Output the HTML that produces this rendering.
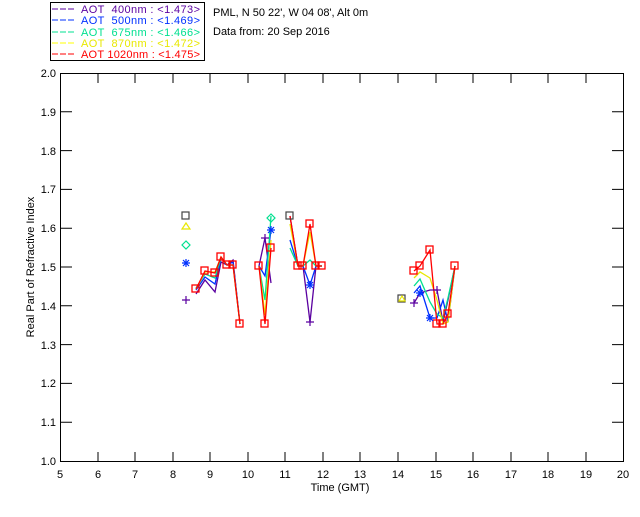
<!DOCTYPE html>
<html><head><meta charset="utf-8"><style>
body{margin:0;background:#fff;width:640px;height:512px;overflow:hidden}
svg text{font-family:"Liberation Sans",sans-serif;font-size:11px}
</style></head><body>
<svg width="640" height="512" xmlns="http://www.w3.org/2000/svg">
<rect x="50.5" y="2.5" width="154" height="58" fill="none" stroke="#000"/>
<g font-size="11">
<line x1="52" y1="9" x2="74" y2="9" stroke="#5a00a0" stroke-dasharray="6,2"/>
<text x="81" y="13" fill="#5a00a0" textLength="119" xml:space="preserve">AOT  400nm : &lt;1.473&gt;</text>
<line x1="52" y1="20" x2="74" y2="20" stroke="#0030ff" stroke-dasharray="6,2"/>
<text x="81" y="24" fill="#0030ff" textLength="119" xml:space="preserve">AOT  500nm : &lt;1.469&gt;</text>
<line x1="52" y1="32" x2="74" y2="32" stroke="#00e090" stroke-dasharray="6,2"/>
<text x="81" y="36" fill="#00e090" textLength="119" xml:space="preserve">AOT  675nm : &lt;1.466&gt;</text>
<line x1="52" y1="43" x2="74" y2="43" stroke="#ffff00" stroke-dasharray="6,2"/>
<text x="81" y="47" fill="#e8e800" textLength="119" xml:space="preserve">AOT  870nm : &lt;1.472&gt;</text>
<line x1="52" y1="54" x2="74" y2="54" stroke="#ff0000" stroke-dasharray="6,2"/>
<text x="81" y="58" fill="#ff0000" textLength="119" xml:space="preserve">AOT 1020nm : &lt;1.475&gt;</text>
</g>
<text x="213" y="16">PML, N 50 22', W 04 08', Alt 0m</text>
<text x="213" y="35">Data from: 20 Sep 2016</text>
<rect x="60.5" y="73.5" width="563" height="388" fill="none" stroke="#000"/>
<g stroke="#000" id="t">
<path d="M98 461v-9M135 461v-9M173 461v-9M210 461v-9M248 461v-9M285 461v-9M323 461v-9M360 461v-9M398 461v-9M436 461v-9M473 461v-9M511 461v-9M548 461v-9M586 461v-9"/>
<path d="M98 74v9M135 74v9M173 74v9M210 74v9M248 74v9M285 74v9M323 74v9M360 74v9M398 74v9M436 74v9M473 74v9M511 74v9M548 74v9M586 74v9"/>
<path d="M61 422.2h11M61 383.4h11M61 344.6h11M61 305.8h11M61 267h11M61 228.2h11M61 189.4h11M61 150.6h11M61 111.8h11"/>
<path d="M623 422.2h-11M623 383.4h-11M623 344.6h-11M623 305.8h-11M623 267h-11M623 228.2h-11M623 189.4h-11M623 150.6h-11M623 111.8h-11"/>
</g>
<g text-anchor="end">
<text x="56" y="465">1.0</text><text x="56" y="426">1.1</text><text x="56" y="387">1.2</text><text x="56" y="349">1.3</text><text x="56" y="310">1.4</text><text x="56" y="271">1.5</text><text x="56" y="232">1.6</text><text x="56" y="193">1.7</text><text x="56" y="155">1.8</text><text x="56" y="116">1.9</text><text x="56" y="77">2.0</text>
</g>
<g text-anchor="middle">
<text x="60" y="478">5</text><text x="98" y="478">6</text><text x="135" y="478">7</text><text x="173" y="478">8</text><text x="210" y="478">9</text><text x="248" y="478">10</text><text x="285" y="478">11</text><text x="323" y="478">12</text><text x="360" y="478">13</text><text x="398" y="478">14</text><text x="436" y="478">15</text><text x="473" y="478">16</text><text x="511" y="478">17</text><text x="548" y="478">18</text><text x="586" y="478">19</text><text x="623" y="478">20</text>
<text x="340" y="491">Time (GMT)</text>
<text transform="translate(34,267) rotate(-90)">Real Part of Refractive Index</text>
</g>
<g fill="none" stroke-width="1.3">
<polyline stroke="#5a00a0" points="196,294 205,280 215,292 221,262 227,265 233,260 240,324"/>
<polyline stroke="#5a00a0" points="259,266 265,238 271,283"/>
<polyline stroke="#5a00a0" points="290,216 298,266 303,266 310,322 316,266 322,266"/>
<polyline stroke="#5a00a0" points="414,303 420,293 430,290 437,290 443,322 448,300 455,266"/>
<polyline stroke="#0030ff" points="196,290 205,277 215,284 221,258 227,265 233,262 240,324"/>
<polyline stroke="#0030ff" points="259,266 265,276 271,230"/>
<polyline stroke="#0030ff" points="290,240 298,266 303,266 310,285 316,266 322,266"/>
<polyline stroke="#0030ff" points="414,293 420,286 430,318 437,318 443,300 448,322 455,266"/>
<polyline stroke="#00e090" points="196,288 205,274 215,278 221,258 227,265 233,265 240,324"/>
<polyline stroke="#00e090" points="259,266 265,300 271,216"/>
<polyline stroke="#00e090" points="290,248 298,266 303,266 310,260 316,266 322,266"/>
<polyline stroke="#00e090" points="414,286 420,279 430,302 437,314 443,318 448,298 455,266"/>
<polyline stroke="#e8e800" points="196,289 205,272 215,272 221,257 227,265 233,265 240,324"/>
<polyline stroke="#e8e800" points="259,266 265,315 271,240"/>
<polyline stroke="#e8e800" points="290,224 298,266 303,266 310,232 316,266 322,266"/>
<polyline stroke="#e8e800" points="414,278 420,272 430,278 437,300 443,324 448,322 455,266"/>
<polyline stroke="#ff0000" points="196,289 205,271 215,273 221,257 227,265 233,265 240,324"/>
<polyline stroke="#ff0000" points="259,266 265,324 271,248"/>
<polyline stroke="#ff0000" points="290,216 298,266 303,266 310,224 316,266 322,266"/>
<polyline stroke="#ff0000" points="414,271 420,266 430,250 437,324 443,324 448,314 455,266"/>
</g>
<g fill="none" stroke="#ff0000" stroke-width="1.3">
<rect x="192" y="285" width="7" height="7"/><rect x="201" y="267" width="7" height="7"/><rect x="211" y="269" width="7" height="7"/><rect x="217" y="253" width="7" height="7"/><rect x="223" y="261" width="7" height="7"/><rect x="229" y="261" width="7" height="7"/><rect x="236" y="320" width="7" height="7"/><rect x="255" y="262" width="7" height="7"/><rect x="261" y="320" width="7" height="7"/><rect x="267" y="244" width="7" height="7"/><rect x="294" y="262" width="7" height="7"/><rect x="299" y="262" width="7" height="7"/><rect x="306" y="220" width="7" height="7"/><rect x="312" y="262" width="7" height="7"/><rect x="318" y="262" width="7" height="7"/><rect x="410" y="267" width="7" height="7"/><rect x="416" y="262" width="7" height="7"/><rect x="426" y="246" width="7" height="7"/><rect x="433" y="320" width="7" height="7"/><rect x="439" y="320" width="7" height="7"/><rect x="444" y="310" width="7" height="7"/><rect x="451" y="262" width="7" height="7"/>
</g>
<g fill="none" stroke="#444" stroke-width="1.2">
<rect x="182" y="212" width="7" height="7"/><rect x="286" y="212" width="7" height="7"/><rect x="398" y="295" width="7" height="7"/>
</g>
<g fill="none" stroke-width="1.2">
<path stroke="#e8e800" d="M186 223l-4 6h8z M402 296l-3 5h6z"/>
<path stroke="#00e090" d="M186 241l-4 4 4 4 4-4z M271 214l-4 4 4 4 4-4z"/>
<path stroke="#0030ff" d="M182 263h8M186 259v8M183 260l6 6M189 260l-6 6 M267 230h8M271 226v8M268 227l6 6M274 227l-6 6 M306 285h8M310 281v8M307 282l6 6M313 282l-6 6 M426 318h8M430 314v8M427 315l6 6M433 315l-6 6 M416 293h8M420 289v8M417 290l6 6M423 290l-6 6"/>
<path stroke="#5a00a0" d="M182 300h8M186 296v8 M306 322h8M310 318v8 M261 238h8M265 234v8 M410 303h8M414 299v8 M433 290h8M437 286v8"/>
</g>
</svg>
</body></html>
